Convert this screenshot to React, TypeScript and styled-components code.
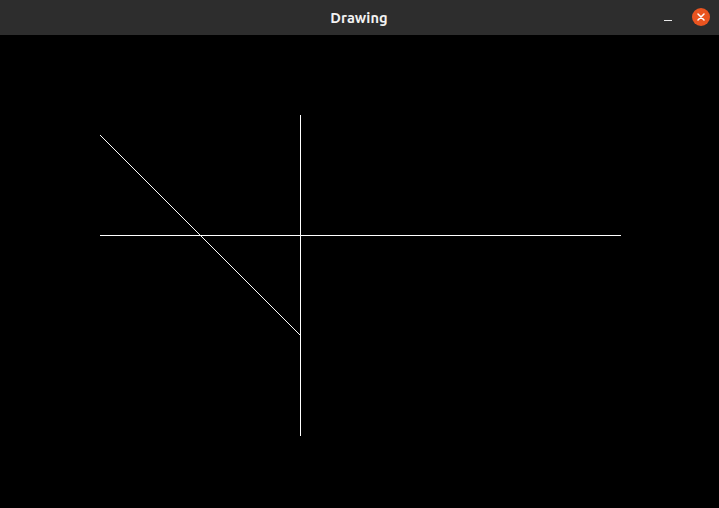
import React from "react";
import styled, { createGlobalStyle } from "styled-components";

const Global = createGlobalStyle`
  html, body { margin: 0; padding: 0; background: #000; }
  body { font-family: "Ubuntu", "Noto Sans", "DejaVu Sans", sans-serif; }
`;

const Window = styled.div`
  width: 719px;
  height: 508px;
  display: flex;
  flex-direction: column;
  background: #000;
  overflow: hidden;
`;

const TitleBar = styled.div`
  height: 35px;
  flex: none;
  background: #2d2d2d;
  display: grid;
  grid-template-columns: 1fr auto 1fr;
  align-items: center;
  padding: 0 9px 0 0;
`;

const Title = styled.div`
  grid-column: 2;
  color: #f2f2f2;
  font-weight: 700;
  font-size: 14.6px;
  letter-spacing: 0.1px;
  padding-left: 8px;
`;

const Controls = styled.div`
  grid-column: 3;
  justify-self: end;
  display: flex;
  align-items: center;
  gap: 20px;
`;

const MinButton = styled.div`
  width: 8px;
  height: 1px;
  background: #e8e8e8;
  margin-top: 5px;
`;

const CloseButton = styled.div`
  width: 18px;
  height: 18px;
  border-radius: 50%;
  background: #e95420;
  display: flex;
  align-items: center;
  justify-content: center;
  margin-top: -2px;
`;

const Canvas = styled.div`
  flex: 1;
  background: #000;
`;

const Svg = styled.svg`
  display: block;
`;

export default function App() {
  return (
    <>
      <Global />
      <Window>
        <TitleBar>
          <Title>Drawing</Title>
          <Controls>
            <MinButton />
            <CloseButton>
              <svg width="8" height="8" viewBox="0 0 8 8">
                <path d="M1 1 L7 7 M7 1 L1 7" stroke="#fff" strokeWidth="1.5" strokeLinecap="round" />
              </svg>
            </CloseButton>
          </Controls>
        </TitleBar>
        <Canvas>
          <Svg width="719" height="473" viewBox="0 0 719 473">
            <line x1="300.5" y1="80" x2="300.5" y2="401" stroke="#fff" strokeWidth="1" shapeRendering="crispEdges" />
            <line x1="100" y1="200.5" x2="621" y2="200.5" stroke="#fff" strokeWidth="1" shapeRendering="crispEdges" />
            <line x1="100.5" y1="100.5" x2="300.5" y2="300.5" stroke="#fff" strokeWidth="1" shapeRendering="crispEdges" />
          </Svg>
        </Canvas>
      </Window>
    </>
  );
}
